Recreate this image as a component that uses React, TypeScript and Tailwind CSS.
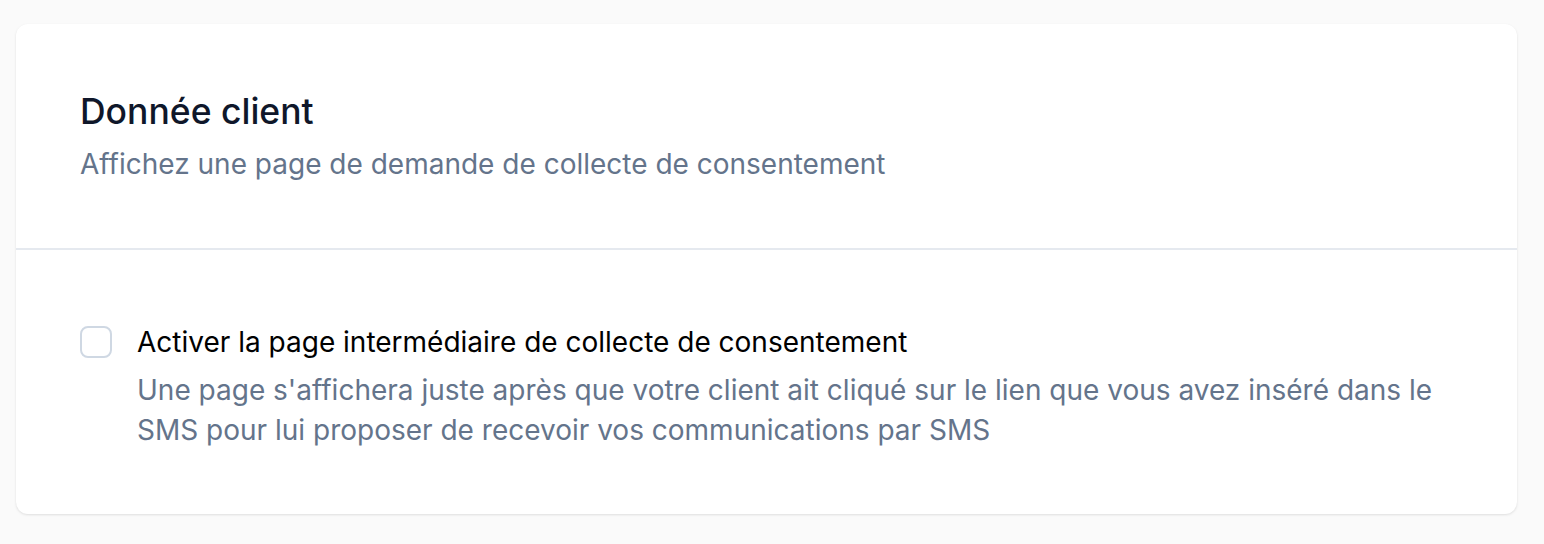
export default function App() {
  return (
    <div className="min-h-[544px] bg-[#fafafa] pt-6 pb-[30px] font-['Inter',sans-serif]">
      <div className="ml-4 w-[1501px] bg-white rounded-[12px] shadow-[0_1px_3px_rgba(0,0,0,0.08),0_1px_2px_rgba(0,0,0,0.04)]">
        <div className="px-16 pt-16 pb-16 border-b-2 border-[#e5e9ef]">
          <h2 className="text-[35.5px] leading-[48px] font-medium text-[#0f172a]">Donnée client</h2>
          <p className="mt-2 text-[28px] leading-[40px] text-[#64748b]">
            Affichez une page de demande de collecte de consentement
          </p>
        </div>
        <div className="px-16 pt-[72px] pb-16">
          <label className="flex items-start gap-[25px]">
            <span className="mt-1 w-8 h-8 shrink-0 rounded-[8px] border-2 border-[#cfd8e3] bg-white" />
            <span className="flex flex-col">
              <span className="text-[28px] leading-[40px] font-normal text-black">
                Activer la page intermédiaire de collecte de consentement
              </span>
              <span className="mt-2 text-[28px] leading-[40px] text-[#64748b]">
                Une page s'affichera juste après que votre client ait cliqué sur le lien que vous avez inséré dans le
                <br />
                SMS pour lui proposer de recevoir vos communications par SMS
              </span>
            </span>
          </label>
        </div>
      </div>
    </div>
  );
}
